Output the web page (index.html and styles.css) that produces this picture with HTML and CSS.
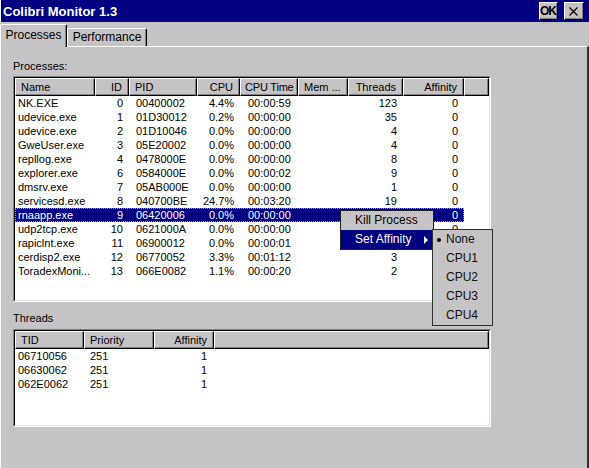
FILE: index.html
```html
<!DOCTYPE html>
<html>
<head>
<meta charset="utf-8">
<link rel="stylesheet" href="styles.css">
</head>
<body>
<div class="window">
  <div class="titlebar">
    <span class="title">Colibri Monitor 1.3</span>
    <div class="tbtns">
      <div class="tbtn ok">OK</div>
      <div class="tbtn close"><svg width="18" height="16" viewBox="0 0 18 16"><path d="M4.5 4.5 L12.5 12.5 M12.5 4.5 L4.5 12.5" stroke="#000" stroke-width="1.3" fill="none"/></svg></div>
    </div>
  </div>
  <div class="tabs">
    <div class="tab active">Processes</div>
    <div class="tab">Performance</div>
  </div>
  <div class="page">
    <div class="label first">Processes:</div>
    <div class="lv lv1">
      <div class="lv-in">
        <div class="hdr hdr1">
          <div class="th">Name</div>
          <div class="th r">ID</div>
          <div class="th">PID</div>
          <div class="th r">CPU</div>
          <div class="th tight">CPU Time</div>
          <div class="th">Mem ...</div>
          <div class="th r">Threads</div>
          <div class="th r">Affinity</div>
          <div class="th"></div>
        </div>
        <div class="row row1"><span class="name">NK.EXE</span><span class="r">0</span><span class="pid">00400002</span><span class="r">4.4%</span><span class="tm">00:00:59</span><span></span><span class="r">123</span><span class="r">0</span></div>
        <div class="row row1"><span class="name">udevice.exe</span><span class="r">1</span><span class="pid">01D30012</span><span class="r">0.2%</span><span class="tm">00:00:00</span><span></span><span class="r">35</span><span class="r">0</span></div>
        <div class="row row1"><span class="name">udevice.exe</span><span class="r">2</span><span class="pid">01D10046</span><span class="r">0.0%</span><span class="tm">00:00:00</span><span></span><span class="r">4</span><span class="r">0</span></div>
        <div class="row row1"><span class="name">GweUser.exe</span><span class="r">3</span><span class="pid">05E20002</span><span class="r">0.0%</span><span class="tm">00:00:00</span><span></span><span class="r">4</span><span class="r">0</span></div>
        <div class="row row1"><span class="name">repllog.exe</span><span class="r">4</span><span class="pid">0478000E</span><span class="r">0.0%</span><span class="tm">00:00:00</span><span></span><span class="r">8</span><span class="r">0</span></div>
        <div class="row row1"><span class="name">explorer.exe</span><span class="r">6</span><span class="pid">0584000E</span><span class="r">0.0%</span><span class="tm">00:00:02</span><span></span><span class="r">9</span><span class="r">0</span></div>
        <div class="row row1"><span class="name">dmsrv.exe</span><span class="r">7</span><span class="pid">05AB000E</span><span class="r">0.0%</span><span class="tm">00:00:00</span><span></span><span class="r">1</span><span class="r">0</span></div>
        <div class="row row1"><span class="name">servicesd.exe</span><span class="r">8</span><span class="pid">040700BE</span><span class="r">24.7%</span><span class="tm">00:03:20</span><span></span><span class="r">19</span><span class="r">0</span></div>
        <div class="row row1 sel"><span class="name">rnaapp.exe</span><span class="r">9</span><span class="pid">06420006</span><span class="r">0.0%</span><span class="tm">00:00:00</span><span></span><span class="r"></span><span class="r">0</span></div>
        <div class="row row1"><span class="name">udp2tcp.exe</span><span class="r">10</span><span class="pid">0621000A</span><span class="r">0.0%</span><span class="tm">00:00:00</span><span></span><span class="r"></span><span class="r">0</span></div>
        <div class="row row1"><span class="name">rapiclnt.exe</span><span class="r">11</span><span class="pid">06900012</span><span class="r">0.0%</span><span class="tm">00:00:01</span><span></span><span class="r"></span><span class="r"></span></div>
        <div class="row row1"><span class="name">cerdisp2.exe</span><span class="r">12</span><span class="pid">06770052</span><span class="r">3.3%</span><span class="tm">00:01:12</span><span></span><span class="r">3</span><span class="r"></span></div>
        <div class="row row1"><span class="name">ToradexMoni...</span><span class="r">13</span><span class="pid">066E0082</span><span class="r">1.1%</span><span class="tm">00:00:20</span><span></span><span class="r">2</span><span class="r"></span></div>
      </div>
    </div>
    <div class="label second">Threads</div>
    <div class="lv lv2">
      <div class="lv-in">
        <div class="hdr hdr2">
          <div class="th">TID</div>
          <div class="th">Priority</div>
          <div class="th r">Affinity</div>
          <div class="th"></div>
        </div>
        <div class="row row2"><span class="name">06710056</span><span class="pid">251</span><span class="r aff">1</span></div>
        <div class="row row2"><span class="name">06630062</span><span class="pid">251</span><span class="r aff">1</span></div>
        <div class="row row2"><span class="name">062E0062</span><span class="pid">251</span><span class="r aff">1</span></div>
      </div>
    </div>
  </div>

  <div class="menu">
    <div class="mi">Kill Process</div>
    <div class="mi hl"><span>Set Affinity</span><span class="arrow"></span></div>
  </div>
  <div class="submenu">
    <div class="si"><span class="bslot"><span class="dot"></span></span>None</div>
    <div class="si"><span class="bslot"></span>CPU1</div>
    <div class="si"><span class="bslot"></span>CPU2</div>
    <div class="si"><span class="bslot"></span>CPU3</div>
    <div class="si"><span class="bslot"></span>CPU4</div>
  </div>
</div>
</body>
</html>
```

FILE: styles.css
```css
* { box-sizing: border-box; }

body {
  margin: 0;
  width: 589px;
  height: 468px;
  overflow: hidden;
  background: #c6c3c6;
  font-family: "Liberation Sans", Arial, sans-serif;
  font-size: 11px;
  color: #000;
}

.window {
  position: relative;
  width: 589px;
  height: 468px;
  display: flex;
  flex-direction: column;
}

.titlebar {
  height: 22px;
  flex: none;
  background: #000080;
  border-left: 1px solid #fff;
  display: flex;
  align-items: center;
  justify-content: space-between;
  padding: 0 5px 0 2px;
}

.title {
  color: #fff;
  font-weight: bold;
  font-size: 13px;
}

.tbtns {
  display: flex;
  gap: 6px;
}

.tbtn {
  height: 18px;
  background: #c6c3c6;
  border: 1px solid;
  border-color: #fff #000 #000 #fff;
  box-shadow: inset -1px -1px #808080;
  display: flex;
  align-items: center;
  justify-content: center;
}

.tbtn svg { display: block; }

.ok {
  width: 19px;
  font-weight: bold;
  font-size: 12px;
  letter-spacing: -1px;
  padding-right: 1px;
}

.close { width: 20px; }

.tabs {
  height: 24px;
  flex: none;
  display: flex;
  align-items: flex-end;
}

.tab {
  width: 80px;
  height: 18px;
  border: 1px solid;
  border-bottom: none;
  border-color: #fff #000 transparent #fff;
  border-radius: 2px 2px 0 0;
  box-shadow: inset -1px 0 #808080;
  font-size: 12px;
  line-height: 17px;
  text-align: center;
  white-space: nowrap;
}

.tab.active {
  width: 67px;
  height: 23px;
  margin-bottom: -1px;
  position: relative;
  z-index: 1;
  background: #c6c3c6;
  line-height: 21px;
}

.page {
  flex: 1;
  border-top: 1px solid #fff;
  border-left: 1px solid #fff;
  border-right: 2px solid #303030;
  padding-left: 12px;
}

.label {
  height: 13px;
  line-height: 13px;
}

.label.first { margin-top: 13px; }
.label.second { margin-top: 10px; }

.lv {
  width: 478px;
  border: 1px solid;
  border-color: #808080 #fff #fff #808080;
}

.lv1 { margin-top: 3px; height: 226px; }
.lv2 { margin-top: 4px; height: 98px; }

.lv-in {
  height: 100%;
  background: #fff;
  border: 1px solid;
  border-color: #000 #dfdfdf #dfdfdf #000;
  overflow: hidden;
}

.hdr {
  display: grid;
  height: 18px;
  background: #c6c3c6;
}

.hdr1 { grid-template-columns: 80px 34px 68px 43px 58px 50px 55px 61px 1fr; }
.hdr2 { grid-template-columns: 69px 70px 60px 1fr; }

.th {
  border: 1px solid;
  border-color: #fff #000 #000 #fff;
  box-shadow: inset -1px -1px #808080;
  padding: 0 6px 0 5px;
  line-height: 16px;
  white-space: nowrap;
  overflow: hidden;
}

.th.r { text-align: right; }
.th.tight { padding: 0 1px 0 4px; letter-spacing: -0.2px; }

.row {
  display: grid;
  height: 14px;
  line-height: 14px;
}

.row1 {
  width: 449px;
  grid-template-columns: 80px 34px 68px 43px 58px 50px 55px 61px;
}

.row2 {
  width: 199px;
  grid-template-columns: 69px 70px 60px;
}

.row > span {
  padding: 0 6px;
  white-space: nowrap;
  overflow: hidden;
}

.row > .r { text-align: right; }
.row > .name { padding-left: 3px; }
.row > .pid { padding-left: 7px; }
.row > .tm { padding-left: 8px; }
.row2 > .pid { padding-left: 6px; }
.row2 > .aff { padding-right: 7px; }

.row.sel {
  background: #000080;
  color: #fff;
  outline: 1px dotted #9a9ad0;
  outline-offset: -1px;
}

.menu {
  position: absolute;
  left: 340px;
  top: 210px;
  width: 94px;
  border: 1px solid #202020;
  background: #c6c3c6;
  font-size: 12px;
  z-index: 2;
}

.mi {
  height: 19px;
  line-height: 19px;
  padding: 0 5px 0 14px;
  display: flex;
  align-items: center;
  justify-content: space-between;
}

.mi.hl {
  background: #000080;
  color: #fff;
}

.arrow {
  width: 0;
  height: 0;
  border-left: 4px solid #fff;
  border-top: 4px solid transparent;
  border-bottom: 4px solid transparent;
}

.submenu {
  position: absolute;
  left: 432px;
  top: 229px;
  width: 61px;
  border: 1px solid #303030;
  background: #c6c3c6;
  font-size: 12px;
  z-index: 3;
}

.si {
  height: 19px;
  line-height: 19px;
  padding-left: 4px;
  display: flex;
  align-items: center;
  color: #111;
}

.bslot {
  width: 9px;
  flex: none;
  display: flex;
  align-items: center;
}

.dot {
  width: 4px;
  height: 4px;
  border-radius: 50%;
  background: #000;
}
```
